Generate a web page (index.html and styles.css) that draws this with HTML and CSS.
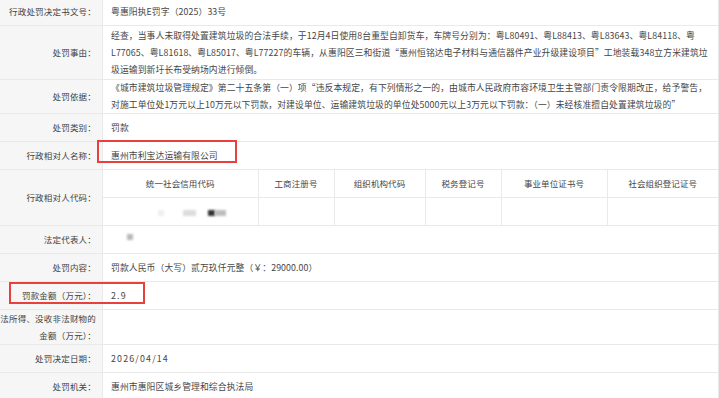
FILE: index.html
```html
<!DOCTYPE html>
<html lang="zh-CN">
  <head>
    <meta charset="UTF-8" />
    <meta name="viewport" content="width=device-width, initial-scale=1.0" />
    <title>行政处罚决定书</title>
    <link rel="stylesheet" href="styles.css">
  </head>
  <body>
    <div class="page">
      <table class="sheet">
        <colgroup><col class="c-label" /><col /></colgroup>
        <tr>
          <th>行政处罚决定书文号：</th>
          <td>粤惠阳执E罚字（2025）33号</td>
        </tr>
        <tr>
          <th>处罚事由：</th>
          <td class="tall">经查，当事人未取得处置建筑垃圾的合法手续，于12月4日使用8台重型自卸货车，车牌号分别为：粤L80491、粤L88413、粤L83643、粤L84118、粤<br>L77065、粤L81618、粤L85017、粤L77227的车辆，从惠阳区三和街道“惠州恒铭达电子材料与通信器件产业升级建设项目”工地装载348立方米建筑垃<br>圾运输到新圩长布受纳场内进行倾倒。</td>
        </tr>
        <tr>
          <th>处罚依据：</th>
          <td class="snug">《城市建筑垃圾管理规定》第二十五条第（一）项“违反本规定，有下列情形之一的，由城市人民政府市容环境卫生主管部门责令限期改正，给予警告，<br>对施工单位处1万元以上10万元以下罚款，对建设单位、运输建筑垃圾的单位处5000元以上3万元以下罚款：（一）未经核准擅自处置建筑垃圾的”</td>
        </tr>
        <tr>
          <th>处罚类别：</th>
          <td>罚款</td>
        </tr>
        <tr>
          <th>行政相对人名称：</th>
          <td>惠州市利宝达运输有限公司</td>
        </tr>
        <tr>
          <th>行政相对人代码：</th>
          <td class="nest">
            <table class="codes">
              <colgroup>
                <col class="w1" /><col class="w2" /><col class="w3" /><col class="w4" /><col class="w5" /><col />
              </colgroup>
              <tr>
                <td>统一社会信用代码</td>
                <td>工商注册号</td>
                <td>组织机构代码</td>
                <td>税务登记号</td>
                <td>事业单位证书号</td>
                <td>社会组织登记证号</td>
              </tr>
              <tr>
                <td class="masked">
                  <span class="blot b-faint"></span><span class="blot b-light"></span><span class="blot b-dark"></span><span class="blot b-mid"></span>
                </td>
                <td></td>
                <td></td>
                <td></td>
                <td></td>
                <td></td>
              </tr>
            </table>
          </td>
        </tr>
        <tr>
          <th>法定代表人：</th>
          <td><span class="blot b-name"></span></td>
        </tr>
        <tr>
          <th>处罚内容：</th>
          <td>罚款人民币（大写）贰万玖仟元整（￥：29000.00）</td>
        </tr>
        <tr>
          <th>罚款金额（万元）：</th>
          <td class="num">2.9</td>
        </tr>
        <tr>
          <th>没收违法所得、没收非法财物的<br>金额（万元）：</th>
          <td></td>
        </tr>
        <tr>
          <th>处罚决定日期：</th>
          <td class="num">2026/04/14</td>
        </tr>
        <tr>
          <th>处罚机关：</th>
          <td>惠州市惠阳区城乡管理和综合执法局</td>
        </tr>
      </table>

      <!-- annotation boxes drawn over the screenshot -->
      <div class="mark mark-name"></div>
      <div class="mark mark-fine"></div>
    </div>
  </body>
</html>
```

FILE: styles.css
```css
html, body {
  margin: 0;
  padding: 0;
  background: #fff;
}
body {
  width: 719px;
  height: 398px;
  overflow: hidden;
  font-family: "Noto Sans CJK SC", "Noto Sans", sans-serif;
  color: #464646;
}
.page {
  position: relative;
  width: 719px;
  height: 398px;
}
.sheet {
  width: 747px;
  margin: -3px 0 0 -28px;
  border-collapse: collapse;
  table-layout: fixed;
}
.c-label { width: 130px; }
.sheet th,
.sheet td {
  border: 1px solid #e9e9e9;
  height: 27px;
  padding: 0 8px;
  font-size: 8.8px;
  line-height: 17px;
  letter-spacing: 0.1px;
  vertical-align: middle;
  white-space: nowrap;
  text-align: left;
}
.sheet td.tall {
  padding-top: 1px;
  padding-bottom: 1px;
}
.sheet td.snug {
  line-height: 16.5px;
}
.sheet th {
  background: #f6f6f6;
  font-weight: normal;
  text-align: right;
  padding: 0 6px 0 0;
  font-size: 8.5px;
  letter-spacing: 0.2px;
  color: #424242;
}
.sheet td.nest {
  padding: 0;
}
.codes {
  width: 100%;
  border-collapse: collapse;
  table-layout: fixed;
}
.codes .w1 { width: 155px; }
.codes .w2 { width: 76px; }
.codes .w3 { width: 91px; }
.codes .w4 { width: 76px; }
.codes .w5 { width: 106px; }
.codes td {
  border: 1px solid #e9e9e9;
  height: 27px;
  padding: 0;
  text-align: center;
  font-size: 8.5px;
}
.codes tr:first-child td { border-top: none; }
.codes tr:last-child td { border-bottom: none; }
.codes td:first-child { border-left: none; }
.codes td:last-child { border-right: none; }
.codes td.masked {
  text-align: left;
  padding-left: 55px;
}
.sheet td.num {
  letter-spacing: 1.2px;
}
.blot {
  display: inline-block;
  height: 6px;
  vertical-align: middle;
  filter: blur(1px);
}
.b-faint { width: 6px; background: #efefef; margin-right: 19px; }
.b-light { width: 13px; background: #dcdcdc; margin-right: 12px; }
.b-dark { width: 7px; background: #333; }
.b-mid { width: 11px; background: #bdbdbd; }
.b-name {
  width: 6px;
  height: 6px;
  margin: 0 0 8px 16px;
  background: #b8b8b8;
}
.mark {
  position: absolute;
  border: 2px solid #e8413c;
  box-sizing: border-box;
}
.mark-name {
  left: 97px;
  top: 143px;
  width: 140px;
  height: 23px;
}
.mark-fine {
  left: 9px;
  top: 285px;
  width: 136px;
  height: 22px;
}
```
